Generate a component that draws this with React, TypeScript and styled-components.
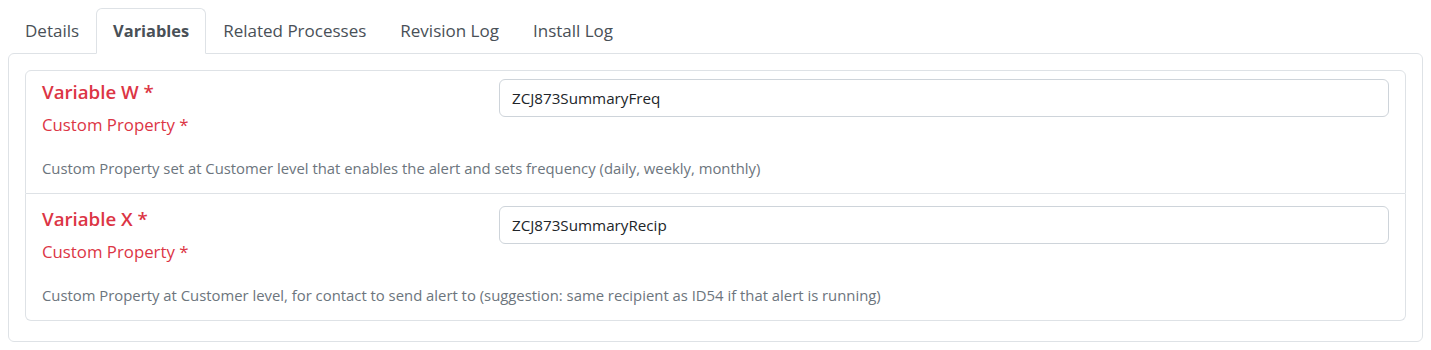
import styled, { createGlobalStyle } from "styled-components";

const GlobalStyle = createGlobalStyle`
  body {
    margin: 8px;
    background: #ffffff;
    font-family: "Open Sans", "Noto Sans", Arial, sans-serif;
    color: #212529;
  }
  * {
    box-sizing: border-box;
  }
`;

const TabList = styled.ul`
  display: flex;
  list-style: none;
  margin: 0;
  padding: 0;
  position: relative;
  z-index: 1;
`;

const Tab = styled.li<{ $active?: boolean }>`
  padding: 10px 16px;
  font-size: ${(p) => (p.$active ? "16.4px" : "17px")};
  line-height: 24px;
  color: #495057;
  font-weight: ${(p) => (p.$active ? 700 : 400)};
  border: 1px solid ${(p) => (p.$active ? "#dee2e6" : "transparent")};
  border-bottom-color: ${(p) => (p.$active ? "#ffffff" : "transparent")};
  border-radius: 6px 6px 0 0;
  background: ${(p) => (p.$active ? "#ffffff" : "transparent")};
  margin-bottom: -1px;
  cursor: pointer;
  white-space: nowrap;
`;

const Panel = styled.div`
  border: 1px solid #dee2e6;
  border-radius: 6px;
  padding: 16px 16px 20px;
`;

const List = styled.div`
  display: flex;
  flex-direction: column;
`;

const Item = styled.div<{ $first?: boolean; $last?: boolean }>`
  border: 1px solid #dee2e6;
  border-top-width: ${(p) => (p.$first ? "1px" : "0")};
  border-radius: ${(p) =>
    p.$first ? "6px 6px 0 0" : p.$last ? "0 0 6px 6px" : "0"};
  padding: ${(p) => (p.$first ? "8px" : "12px")} 16px 14px;
`;

const Row = styled.div`
  display: grid;
  grid-template-columns: calc((100% + 24px) / 3 - 24px) 1fr;
  column-gap: 24px;
`;

const Title = styled.h5`
  margin: 1px 0 9px;
  font-size: 18.7px;
  line-height: 24px;
  font-weight: 600;
  color: #dc3545;
`;

const Label = styled.div`
  font-size: 16.8px;
  line-height: 24px;
  color: #dc3545;
`;

const Input = styled.input`
  display: block;
  width: 100%;
  height: 38px;
  padding: 6px 12px;
  font-family: inherit;
  font-size: 15.2px;
  line-height: 24px;
  color: #212529;
  border: 1px solid #ced4da;
  border-radius: 6px;
  background: #ffffff;
  outline: none;
`;

const Description = styled.div`
  margin-top: 21px;
  font-size: 14.85px;
  line-height: 21px;
  color: #6c757d;
`;

const tabs = ["Details", "Variables", "Related Processes", "Revision Log", "Install Log"];

const variables = [
  {
    name: "Variable W",
    value: "ZCJ873SummaryFreq",
    description:
      "Custom Property set at Customer level that enables the alert and sets frequency (daily, weekly, monthly)",
  },
  {
    name: "Variable X",
    value: "ZCJ873SummaryRecip",
    description:
      "Custom Property at Customer level, for contact to send alert to (suggestion: same recipient as ID54 if that alert is running)",
  },
];

export default function App() {
  return (
    <>
      <GlobalStyle />
      <TabList>
        {tabs.map((t) => (
          <Tab key={t} $active={t === "Variables"}>
            {t}
          </Tab>
        ))}
      </TabList>
      <Panel>
        <List>
          {variables.map((v, i) => (
            <Item key={v.name} $first={i === 0} $last={i === variables.length - 1}>
              <Row>
                <div>
                  <Title>{v.name} *</Title>
                  <Label>Custom Property *</Label>
                </div>
                <div>
                  <Input defaultValue={v.value} />
                </div>
              </Row>
              <Description>{v.description}</Description>
            </Item>
          ))}
        </List>
      </Panel>
    </>
  );
}
